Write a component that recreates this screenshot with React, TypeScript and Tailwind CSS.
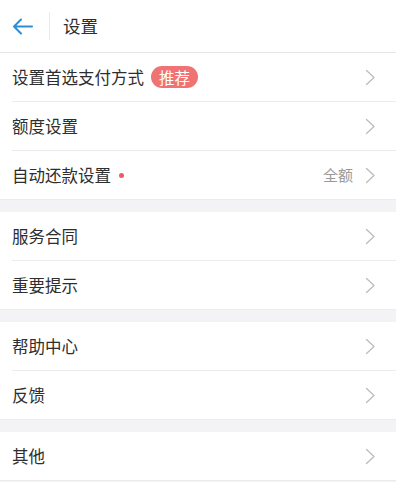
import React from 'react';

type Item = { label: string; badge?: string; dot?: boolean; value?: string };

const groups: Item[][] = [
  [
    { label: '设置首选支付方式', badge: '推荐' },
    { label: '额度设置' },
    { label: '自动还款设置', dot: true, value: '全额' },
  ],
  [{ label: '服务合同' }, { label: '重要提示' }],
  [{ label: '帮助中心' }, { label: '反馈' }],
  [{ label: '其他' }],
];

function Chevron() {
  return (
    <svg width="11" height="17" viewBox="0 0 11 17" fill="none" className="shrink-0">
      <path d="M1.5 1.5 L9 8.5 L1.5 15.5" stroke="#bcbcbc" strokeWidth="1.3" strokeLinecap="round" strokeLinejoin="round" />
    </svg>
  );
}

function Row({ item, last }: { item: Item; last: boolean }) {
  return (
    <div className="pl-3">
      <div className={`flex items-center pr-[20px] ${last ? 'h-[48px]' : 'h-[49px] border-b border-[#ececec]'}`}>
        <span className="text-[16.5px] text-[#2e2e2e]">{item.label}</span>
        {item.badge && (
          <span className="ml-[7px] h-[22px] px-[8px] rounded-full bg-[#f07373] text-white text-[15.5px] leading-[22px]">
            {item.badge}
          </span>
        )}
        {item.dot && <span className="ml-[8px] w-[5px] h-[5px] rounded-full bg-[#f05a5a]" />}
        <div className="flex-1" />
        {item.value && <span className="mr-[12px] text-[15px] text-[#9a9a9a]">{item.value}</span>}
        <Chevron />
      </div>
    </div>
  );
}

export default function App() {
  return (
    <div
      className="w-[396px] h-[482px] overflow-hidden bg-[#f3f3f6]"
      style={{ fontFamily: '"Noto Sans CJK SC", "Noto Sans", sans-serif' }}
    >
      <header className="h-[53px] bg-white border-b border-[#e6e6e6] flex items-center">
        <div className="w-[49px] flex justify-center pr-[4px]">
          <svg width="21" height="17" viewBox="0 0 21 17" fill="none">
            <path d="M20 8.5 H2 M9 1.5 L2 8.5 L9 15.5" stroke="#2b8fd8" strokeWidth="2" strokeLinecap="round" strokeLinejoin="round" />
          </svg>
        </div>
        <div className="w-px h-[28px] bg-[#e8e8e8]" />
        <span className="ml-[13px] text-[17.5px] text-[#2e2e2e]">设置</span>
      </header>
      <div className="flex flex-col gap-[12px]">
        {groups.map((g, gi) => (
          <div key={gi} className="bg-white border-b border-[#ececec]">
            {g.map((item, i) => (
              <Row key={item.label} item={item} last={i === g.length - 1} />
            ))}
          </div>
        ))}
      </div>
    </div>
  );
}
